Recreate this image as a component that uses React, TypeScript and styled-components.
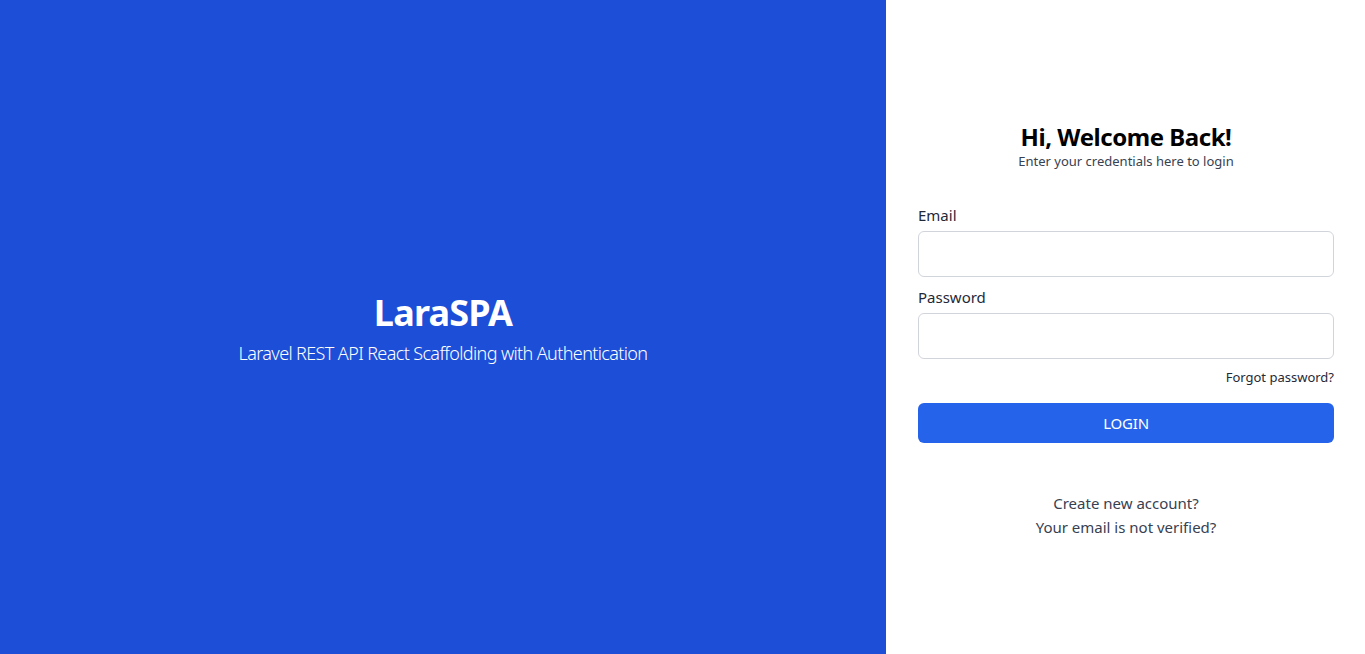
import React from "react";
import styled, { createGlobalStyle } from "styled-components";

const Global = createGlobalStyle`
  * { box-sizing: border-box; }
  html, body { margin: 0; padding: 0; }
  body { font-family: "Noto Sans", "Open Sans", sans-serif; color: #111827; background: #fff; }
`;

const Page = styled.div`
  display: flex;
  height: 654px;
  width: 100%;
`;

const Hero = styled.section`
  flex: 0 0 886px;
  background: #1d4ed8;
  color: #fff;
  display: flex;
  flex-direction: column;
  align-items: center;
  justify-content: center;
  padding-top: 6px;
`;

const Brand = styled.h1`
  margin: 0;
  font-size: 36px;
  line-height: 40px;
  font-weight: 700;
  letter-spacing: -0.8px;
`;

const Tagline = styled.p`
  margin: 6px 0 0;
  font-size: 18px;
  line-height: 28px;
  font-weight: 300;
  letter-spacing: -0.62px;
`;

const Side = styled.section`
  flex: 1;
  display: flex;
  flex-direction: column;
  justify-content: center;
  padding: 6px 31px 0 32px;
`;

const Head = styled.div`
  text-align: center;
`;

const Title = styled.h2`
  margin: 0;
  font-size: 24px;
  line-height: 32px;
  font-weight: 700;
  color: #000;
  letter-spacing: -0.45px;
`;

const Sub = styled.p`
  margin: -2px 0 0;
  font-size: 13px;
  line-height: 20px;
  color: #374151;
`;

const Form = styled.form`
  margin-top: 32px;
  display: flex;
  flex-direction: column;
`;

const Label = styled.label<{ $top?: number }>`
  display: block;
  font-size: 15px;
  line-height: 24px;
  color: #1f2937;
  margin-top: ${(p) => p.$top ?? 0}px;
  margin-bottom: 4px;
`;

const Input = styled.input`
  display: block;
  width: 100%;
  height: 46px;
  border: 1px solid #d1d5db;
  border-radius: 6px;
  padding: 0 12px;
  font-size: 16px;
  outline: none;
  background: #fff;
`;

const Forgot = styled.a`
  align-self: flex-end;
  margin-top: 8px;
  font-size: 13px;
  line-height: 20px;
  color: #1f2937;
  text-decoration: none;
`;

const Button = styled.button`
  margin-top: 16px;
  height: 40px;
  width: 100%;
  border: none;
  border-radius: 6px;
  background: #2563eb;
  color: #fff;
  font-family: inherit;
  font-size: 15px;
  letter-spacing: -0.2px;
`;

const Links = styled.div`
  margin-top: 48px;
  display: flex;
  flex-direction: column;
  align-items: center;
`;

const LinkText = styled.a`
  font-size: 15px;
  line-height: 24px;
  color: #374151;
  text-decoration: none;
`;

export default function App() {
  return (
    <>
      <Global />
      <Page>
        <Hero>
          <Brand>LaraSPA</Brand>
          <Tagline>Laravel REST API React Scaffolding with Authentication</Tagline>
        </Hero>
        <Side>
          <Head>
            <Title>Hi, Welcome Back!</Title>
            <Sub>Enter your credentials here to login</Sub>
          </Head>
          <Form onSubmit={(e) => e.preventDefault()}>
            <Label htmlFor="email">Email</Label>
            <Input id="email" type="email" />
            <Label htmlFor="password" $top={8}>Password</Label>
            <Input id="password" type="password" />
            <Forgot href="#">Forgot password?</Forgot>
            <Button type="submit">LOGIN</Button>
          </Form>
          <Links>
            <LinkText href="#">Create new account?</LinkText>
            <LinkText href="#">Your email is not verified?</LinkText>
          </Links>
        </Side>
      </Page>
    </>
  );
}
